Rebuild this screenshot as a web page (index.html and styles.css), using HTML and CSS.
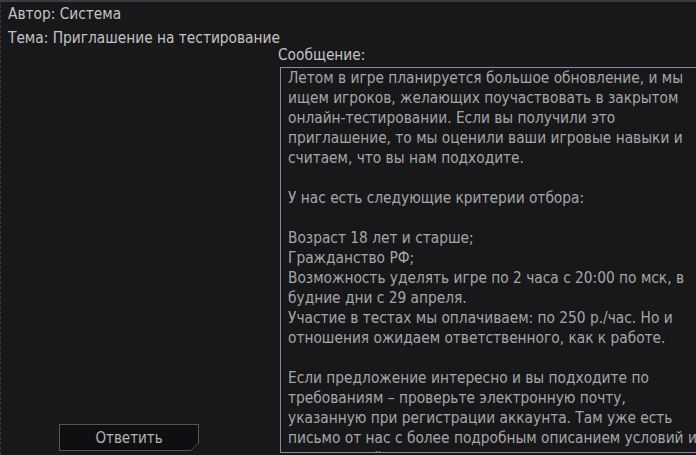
FILE: index.html
```html
<!DOCTYPE html>
<html lang="ru">
<head>
    <meta charset="UTF-8">
    <title>Письмо</title>
    <link rel="stylesheet" href="styles.css">
</head>
<body>

<div class="letter">
    <div class="letter-head">
        <p>Автор: Система</p>
        <p>Тема: Приглашение на тестирование</p>
    </div>

    <div class="letter-body">
        <div class="actions">
            <button class="reply-btn">Ответить</button>
        </div>

        <div class="message">
            <div class="message-label">Сообщение:</div>
            <div class="message-box">
                <p>Летом в игре планируется большое обновление, и мы ищем игроков, желающих поучаствовать в закрытом онлайн-тестировании. Если вы получили это приглашение, то мы оценили ваши игровые навыки и считаем, что вы нам подходите.</p>
                <p>У нас есть следующие критерии отбора:</p>
                <p>Возраст 18 лет и старше;<br>
                Гражданство РФ;<br>
                Возможность уделять игре по 2 часа с 20:00 по мск, в будние дни с 29 апреля.<br>
                Участие в тестах мы оплачиваем: по 250 р./час. Но и отношения ожидаем ответственного, как к работе.</p>
                <p>Если предложение интересно и вы подходите по требованиям – проверьте электронную почту, указанную при регистрации аккаунта. Там уже есть письмо от нас с более подробным описанием условий и инструкцией.</p>
            </div>
        </div>
    </div>
</div>

</body>
</html>
```

FILE: styles.css
```css
* {
    margin: 0;
    padding: 0;
    box-sizing: border-box;
}

html, body {
    height: 100%;
    overflow: hidden;
}

body {
    background-color: #18181b;
    color: #c4c4c4;
    font-family: 'DejaVu Sans Condensed', 'DejaVu Sans', sans-serif;
    font-size: 15.3px;
}

.letter {
    height: 455px;
    border-top: 2px solid #3c3c40;
    border-left: 1px dashed #3a3a3e;
    display: flex;
    flex-direction: column;
}

.letter-head {
    padding: 0 0 0 7px;
    height: 45px;
}

.letter-head p {
    line-height: 24px;
    white-space: nowrap;
}

.letter-body {
    flex: 1;
    display: flex;
    min-height: 0;
}

.actions {
    width: 277px;
    flex-shrink: 0;
    display: flex;
    align-items: flex-end;
    padding: 0 0 4px 58px;
}

.reply-btn {
    width: 140px;
    height: 27px;
    background-color: #0f0f11;
    border: 1px solid #55555a;
    color: #b4b4b4;
    font-family: inherit;
    font-size: 15px;
    clip-path: polygon(0 0, 100% 0, 100% 70%, 94% 100%, 0 100%);
    position: relative;
}

.reply-btn::after {
    /* скошенный угол */
    content: "";
    position: absolute;
    right: -2px;
    bottom: 2px;
    width: 12px;
    height: 1px;
    background-color: #55555a;
    transform: rotate(-45deg);
}

.message {
    flex: 1;
    display: flex;
    flex-direction: column;
    min-height: 0;
}

.message-label {
    height: 20px;
    line-height: 17px;
}

.message-box {
    margin-left: 2px;
    width: 430px;
    height: 386px;
    border: 1px solid #8a8aa2;
    border-right: none;
    padding: 0 8px 0 7px;
    color: #a6a6a6;
    line-height: 20px;
    overflow: hidden;
}

.message-box p {
    margin-bottom: 20px;
}
```
